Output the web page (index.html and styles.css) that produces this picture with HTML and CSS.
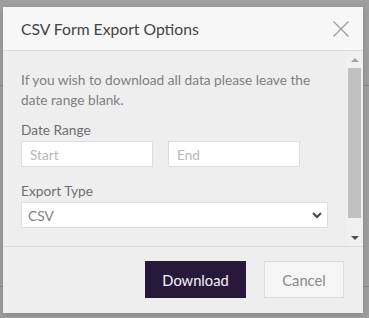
FILE: index.html
```html
<!DOCTYPE html>
<html lang="en">
<head>
  <meta charset="UTF-8">
  <meta name="viewport" content="width=device-width, initial-scale=1.0">
  <title>CSV Form Export Options</title>
  <link rel="stylesheet" href="styles.css">
</head>
<body>
  <div class="backdrop">
    <div class="page-line line-top"></div>
    <div class="page-line line-bottom"></div>

    <div class="modal">
      <div class="modal-header">
        <h4 class="modal-title">CSV Form Export Options</h4>
        <button class="close" aria-label="Close">
          <svg width="16" height="16" viewBox="0 0 16 16">
            <path d="M0.5 0.5 L15.5 15.5 M15.5 0.5 L0.5 15.5" stroke="#9a9a9a" stroke-width="1.2" fill="none"/>
          </svg>
        </button>
      </div>

      <div class="modal-scroll">
        <div class="modal-body">
          <p class="help">If you wish to download all data please leave the date range blank.</p>

          <label>Date Range</label>
          <div class="range">
            <input type="text" placeholder="Start">
            <input type="text" placeholder="End">
          </div>

          <label for="type">Export Type</label>
          <div class="select">
            <span>CSV</span>
            <svg width="10" height="7" viewBox="0 0 10 7">
              <path d="M1 1 L5 5 L9 1" stroke="#444" stroke-width="2" fill="none"/>
            </svg>
          </div>
        </div>

        <div class="scrollbar">
          <div class="arrow up"></div>
          <div class="thumb"></div>
          <div class="arrow down"></div>
        </div>
      </div>

      <div class="modal-footer">
        <button class="btn btn-primary">Download</button>
        <button class="btn btn-default">Cancel</button>
      </div>
    </div>
  </div>
</body>
</html>
```

FILE: styles.css
```css
body {
  margin: 0;
  font-family: Lato, "Open Sans", sans-serif;
  background: #9e9e9e;
}
.backdrop {
  position: relative;
  width: 369px;
  height: 318px;
  padding: 7px 0 0 3px;
  box-sizing: border-box;
  overflow: hidden;
}
.page-line {
  position: absolute;
  left: 0;
  right: 0;
  height: 1px;
  background: #8a8a8a;
}
.line-top {
  top: 85px;
}
.line-bottom {
  top: 286px;
}
.modal {
  position: relative;
  width: 360px;
  height: 306px;
  background: #eeeeee;
  display: flex;
  flex-direction: column;
  box-shadow: 0 2px 6px rgba(0, 0, 0, 0.15);
}
.modal-header {
  height: 44px;
  box-sizing: border-box;
  background: #f7f7f7;
  border-bottom: 1px solid #dcdcdc;
  display: flex;
  align-items: center;
  justify-content: space-between;
  padding: 0 14px 0 18px;
}
.modal-title {
  margin: 0;
  font-size: 15.7px;
  font-weight: normal;
  color: #444;
  line-height: 20px;
}
.close {
  border: 0;
  background: none;
  padding: 0;
  width: 16px;
  height: 16px;
  display: flex;
}
.modal-scroll {
  height: 195px;
  display: flex;
  border-bottom: 1px solid #dcdcdc;
}
.modal-body {
  flex: 1;
  padding: 19px 18px 0 18px;
}
.help {
  margin: 0 0 10px;
  font-size: 13.7px;
  line-height: 20px;
  color: #808080;
}
label {
  display: block;
  font-size: 13.7px;
  line-height: 20px;
  color: #6e6e6e;
  margin-bottom: 1px;
}
.range {
  display: flex;
  gap: 15px;
  margin-bottom: 14px;
}
.range input {
  width: 132px;
  height: 26px;
  box-sizing: border-box;
  border: 1px solid #dedede;
  background: #fff;
  padding: 0 8px;
  font-family: Lato, "Open Sans", sans-serif;
  font-size: 13.7px;
  color: #777;
}
.range input::placeholder {
  color: #b8b8b8;
}
.select {
  height: 26px;
  box-sizing: border-box;
  border: 1px solid #dedede;
  background: #fff;
  display: flex;
  align-items: center;
  justify-content: space-between;
  padding: 0 5px 0 6px;
  font-size: 13.7px;
  color: #808080;
}
.scrollbar {
  width: 17px;
  display: flex;
  flex-direction: column;
  align-items: center;
  background: #f0f0f0;
}
.arrow {
  height: 17px;
  width: 100%;
  display: flex;
  align-items: center;
  justify-content: center;
}
.arrow::after {
  content: "";
  border-left: 4px solid transparent;
  border-right: 4px solid transparent;
}
.up::after {
  border-bottom: 4px solid #a3a3a3;
}
.down {
  margin-top: auto;
}
.down::after {
  border-top: 4px solid #505050;
}
.thumb {
  width: 13px;
  height: 150px;
  background: #c1c1c1;
}
.modal-footer {
  flex: 1;
  display: flex;
  justify-content: flex-end;
  align-items: flex-start;
  gap: 18px;
  padding: 14px 19px 0 0;
}
.btn {
  height: 37px;
  font-family: Lato, "Open Sans", sans-serif;
  font-size: 14.7px;
  padding: 0;
}
.btn-primary {
  width: 101px;
  background: #28193a;
  color: #f4f4f4;
  border: 0;
}
.btn-default {
  width: 80px;
  background: #f5f5f5;
  color: #8a8a8a;
  border: 1px solid #dcdcdc;
}
```
